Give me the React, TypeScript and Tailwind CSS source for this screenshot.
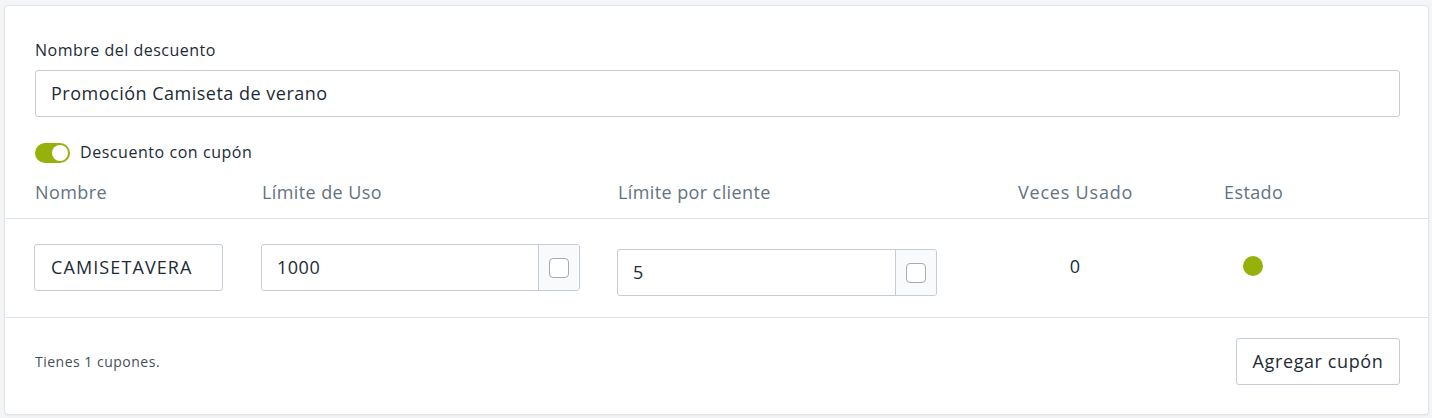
import { useState } from 'react';

const font = { fontFamily: '"Open Sans", Lato, Arial, sans-serif' };

function Addon() {
  return (
    <div className="flex w-[41px] shrink-0 items-center justify-center border-l border-[#c4cdd5] bg-[#f9fafb]">
      <span className="block h-[20px] w-[20px] rounded-[4px] border border-[#a3acb6] bg-white" />
    </div>
  );
}

function LimitInput({ value, width }: { value: string; width: string }) {
  return (
    <div className={`flex h-[47px] ${width} overflow-hidden rounded-[3px] border border-[#c4cdd5] bg-white`}>
      <div className="flex flex-1 items-center px-[15px] text-[18px] tracking-[0.5px] text-[#212b36]">{value}</div>
      <Addon />
    </div>
  );
}

export default function App() {
  const [enabled, setEnabled] = useState(true);

  return (
    <div className="h-[418px] w-full bg-[#f4f5f7] pl-[4px] pr-[3px] pt-[5px]" style={font}>
      <div className="rounded-[4px] border border-[#e1e4e8] bg-white shadow-[0_1px_2px_rgba(0,0,0,0.05)]">
        {/* Discount name */}
        <div className="pl-[30px] pr-[28px] pt-[34px]">
          <label className="block text-[16px] leading-5 tracking-[0.5px] text-[#212b36]">Nombre del descuento</label>
          <div className="mt-[10px] flex h-[47px] items-center rounded-[3px] border border-[#c4cdd5] px-[15px] text-[18px] tracking-[0.5px] text-[#212b36]">
            Promoción Camiseta de verano
          </div>

          <div className="mt-[26px] flex items-center gap-[10px]">
            <button
              onClick={() => setEnabled(!enabled)}
              className={`relative h-[20px] w-[35px] rounded-full ${enabled ? 'bg-[#95b10a]' : 'bg-[#c4cdd5]'}`}
            >
              <span
                className={`absolute top-[2px] h-[16px] w-[16px] rounded-full bg-white ${enabled ? 'right-[2px]' : 'left-[2px]'}`}
              />
            </button>
            <span className="-translate-y-[1px] text-[16px] leading-5 tracking-[0.55px] text-[#212b36]">Descuento con cupón</span>
          </div>
        </div>

        {/* Coupons table */}
        <div className="mt-[17px] grid grid-cols-[227px_356px_400px_206px_1fr] border-b border-[#dfe3e8] pb-[14px] pl-[30px] text-[18px] leading-6 tracking-[0.4px] text-[#637381]">
          <div>Nombre</div>
          <div>Límite de Uso</div>
          <div>Límite por cliente</div>
          <div className="tracking-[0.8px]">Veces Usado</div>
          <div>Estado</div>
        </div>

        <div className="grid h-[99px] grid-cols-[227px_356px_400px_206px_1fr] items-start border-b border-[#dfe3e8] pl-[29px] pt-[25px]">
          <div className="flex h-[47px] w-[189px] items-center rounded-[3px] border border-[#c4cdd5] px-[16px] text-[18px] tracking-[1.1px] text-[#212b36]">
            CAMISETAVERA
          </div>
          <LimitInput value="1000" width="w-[319px]" />
          <div className="pt-[5px]">
            <LimitInput value="5" width="w-[320px]" />
          </div>
          <div className="flex h-[45px] w-[116px] items-center justify-center text-[18px] text-[#212b36]">0</div>
          <div className="flex h-[44px] w-[60px] items-center justify-center">
            <span className="block h-[20px] w-[20px] rounded-full bg-[#95b10a]" />
          </div>
        </div>

        {/* Footer */}
        <div className="flex items-center justify-between pb-[29px] pl-[30px] pr-[28px] pt-[20px]">
          <span className="text-[14px] tracking-[0.5px] text-[#454f5b]">Tienes 1 cupones.</span>
          <button className="h-[47px] w-[164px] rounded-[3px] border border-[#c4cdd5] bg-white text-[18px] tracking-[0.6px] text-[#212b36]">
            Agregar cupón
          </button>
        </div>
      </div>
    </div>
  );
}
